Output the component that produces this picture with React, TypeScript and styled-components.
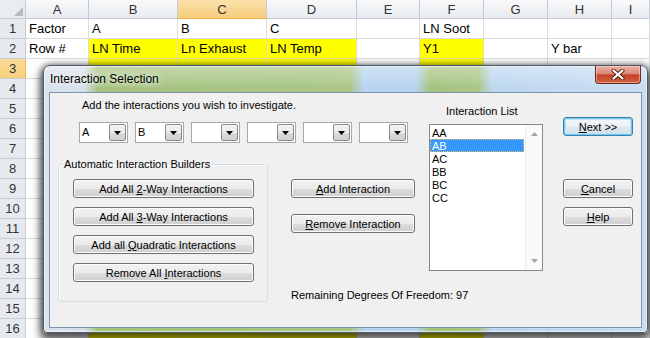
import styled, { createGlobalStyle } from "styled-components";

const GlobalStyle = createGlobalStyle`
  html, body {
    margin: 0;
    padding: 0;
  }
  body {
    background: #fff;
    font-family: "Liberation Sans", Arial, sans-serif;
    overflow: hidden;
  }
`;

const sheetColumns = [
  { key: "A", width: 63 },
  { key: "B", width: 89 },
  { key: "C", width: 89 },
  { key: "D", width: 90 },
  { key: "E", width: 63 },
  { key: "F", width: 64 },
  { key: "G", width: 64 },
  { key: "H", width: 64 },
  { key: "I", width: 38 },
];

const cellText: Record<string, string> = {
  A1: "Factor",
  B1: "A",
  C1: "B",
  D1: "C",
  F1: "LN Soot",
  A2: "Row #",
  B2: "LN Time",
  C2: "Ln Exhaust",
  D2: "LN Temp",
  F2: "Y1",
  H2: "Y bar",
};

const dataColumns = ["B", "C", "D", "F"];
const rowNumbers = Array.from({ length: 16 }, (_, i) => i + 1);

const builders = [
  { before: "Add All ", key: "2", after: "-Way Interactions" },
  { before: "Add All ", key: "3", after: "-Way Interactions" },
  { before: "Add all ", key: "Q", after: "uadratic Interactions" },
  { before: "Remove All ", key: "I", after: "nteractions" },
];

const combos = ["A", "B", "", "", "", ""];
const interactions = ["AA", "AB", "AC", "BB", "BC", "CC"];

export default function App() {
  return (
    <Page>
      <GlobalStyle />
      <Sheet>
        <Corner>
          <svg width="9" height="9" viewBox="0 0 9 9">
            <path d="M9 0 V9 H0 Z" fill="#b6bcc4" />
          </svg>
        </Corner>
        {sheetColumns.map((c) => (
          <ColHeader key={c.key} $active={c.key === "C"}>
            {c.key}
          </ColHeader>
        ))}
        {rowNumbers.map((r) => (
          <Row key={r}>
            <RowHeader $active={r === 3}>{r}</RowHeader>
            {sheetColumns.map((c) => (
              <Cell key={c.key} $filled={r >= 2 && dataColumns.includes(c.key)}>
                {cellText[`${c.key}${r}`]}
              </Cell>
            ))}
          </Row>
        ))}
      </Sheet>

      <Dialog>
        <TitleBar>
          <Title>Interaction Selection</Title>
          <CloseButton>
            <svg width="14" height="11" viewBox="0 0 14 11">
              <path d="M2.5 1.5 L11.5 9.5 M11.5 1.5 L2.5 9.5" stroke="#5a1e14" strokeWidth="4" strokeLinecap="round" />
              <path d="M2.5 1.5 L11.5 9.5 M11.5 1.5 L2.5 9.5" stroke="#fff" strokeWidth="2.2" strokeLinecap="round" />
            </svg>
          </CloseButton>
        </TitleBar>

        <Client>
          <LeftColumn>
            <Instruction>Add the interactions you wish to investigate.</Instruction>
            <ComboRow>
              {combos.map((v, i) => (
                <Combo key={i}>
                  <ComboValue>{v}</ComboValue>
                  <ComboButton>
                    <svg width="7" height="4" viewBox="0 0 7 4">
                      <path d="M0 0 H7 L3.5 4 Z" fill="#000" />
                    </svg>
                  </ComboButton>
                </Combo>
              ))}
            </ComboRow>
            <LowerRow>
              <GroupBox>
                <GroupLegend>Automatic Interaction Builders</GroupLegend>
                <ButtonStack>
                  {builders.map((b) => (
                    <Button key={b.key} $width={181}>
                      <span>
                        {b.before}
                        <u>{b.key}</u>
                        {b.after}
                      </span>
                    </Button>
                  ))}
                </ButtonStack>
              </GroupBox>
              <MiddleColumn>
                <Button $width={124}>
                  <span>
                    <u>A</u>dd Interaction
                  </span>
                </Button>
                <Button $width={124} $gap={16}>
                  <span>
                    <u>R</u>emove Interaction
                  </span>
                </Button>
                <Remaining>Remaining Degrees Of Freedom: 97</Remaining>
              </MiddleColumn>
            </LowerRow>
          </LeftColumn>

          <ListColumn>
            <ListLabel>Interaction List</ListLabel>
            <ListBox>
              <ListItems>
                {interactions.map((item) => (
                  <ListItem key={item} $selected={item === "AB"}>
                    {item}
                  </ListItem>
                ))}
              </ListItems>
              <ScrollTrack>
                <svg width="7" height="4" viewBox="0 0 7 4">
                  <path d="M0 4 H7 L3.5 0 Z" fill="#a3a3a3" />
                </svg>
                <svg width="7" height="4" viewBox="0 0 7 4">
                  <path d="M0 0 H7 L3.5 4 Z" fill="#a3a3a3" />
                </svg>
              </ScrollTrack>
            </ListBox>
          </ListColumn>

          <ActionColumn>
            <Button $width={70} $default>
              <span>
                <u>N</u>ext &gt;&gt;
              </span>
            </Button>
            <Button $width={70} $gap={43}>
              <span>
                <u>C</u>ancel
              </span>
            </Button>
            <Button $width={70} $gap={9}>
              <span>
                <u>H</u>elp
              </span>
            </Button>
          </ActionColumn>
        </Client>
      </Dialog>
    </Page>
  );
}

const Page = styled.div`
  position: relative;
  width: 650px;
  height: 338px;
  overflow: hidden;
`;

const Sheet = styled.div`
  display: grid;
  grid-template-columns: 26px ${sheetColumns.map((c) => `${c.width}px`).join(" ")};
  grid-template-rows: 19px;
  grid-auto-rows: 20px;
  font-size: 13px;
  color: #000;
`;

const Row = styled.div`
  display: contents;
`;

const headerBase = `
  box-sizing: border-box;
  display: flex;
  align-items: center;
  justify-content: center;
  border-right: 1px solid #c5ccd5;
  border-bottom: 1px solid #c5ccd5;
  color: #333;
`;

const Corner = styled.div`
  ${headerBase};
  background: #e9ecf0;
  align-items: flex-end;
  justify-content: flex-end;
  padding: 0 2px 2px 0;
`;

const ColHeader = styled.div<{ $active?: boolean }>`
  ${headerBase};
  background: ${(p) =>
    p.$active
      ? "linear-gradient(#fbe2ac, #f6cd7c)"
      : "linear-gradient(#f8f9fa, #e8ebee)"};
  border-bottom-color: ${(p) => (p.$active ? "#f2b24a" : "#c5ccd5")};
`;

const RowHeader = styled.div<{ $active?: boolean }>`
  ${headerBase};
  background: ${(p) => (p.$active ? "linear-gradient(#fbdc9b, #f7cf7a)" : "#e6eaef")};
  border-right-color: ${(p) => (p.$active ? "#f2b24a" : "#c5ccd5")};
`;

const Cell = styled.div<{ $filled?: boolean }>`
  box-sizing: border-box;
  padding-left: 3px;
  line-height: 19px;
  white-space: nowrap;
  overflow: visible;
  background: ${(p) => (p.$filled ? "#ffff00" : "#fff")};
  border-right: 1px solid ${(p) => (p.$filled ? "#e3e3a0" : "#dadcdd")};
  border-bottom: 1px solid ${(p) => (p.$filled ? "#e3e3a0" : "#dadcdd")};
`;

const Dialog = styled.div`
  position: absolute;
  left: 43px;
  top: 65px;
  width: 605px;
  height: 268px;
  box-sizing: border-box;
  display: flex;
  flex-direction: column;
  padding: 0 5px 4px 5px;
  border: 1px solid #4c5968;
  border-radius: 7px 7px 4px 4px;
  font-family: "Liberation Sans", Arial, sans-serif;
  font-size: 11px;
  color: #000;
  background:
    linear-gradient(180deg, rgba(255, 255, 255, 0.35), rgba(255, 255, 255, 0) 22px),
    linear-gradient(
      90deg,
      #dbe3ec 0px,
      #d6e0ea 40px,
      #a5c37f 54px,
      #a9c686 306px,
      #b8d4f0 320px,
      #b8d4f0 372px,
      #a5c37f 386px,
      #a9c686 434px,
      #bdd7f1 448px,
      #c8ddf2 100%
    );
  box-shadow: inset 0 0 0 1px rgba(255, 255, 255, 0.55), 0 5px 8px 3px rgba(0, 0, 0, 0.6),
    0 0 6px 1px rgba(0, 0, 0, 0.35);
`;

const TitleBar = styled.div`
  height: 26px;
  display: flex;
  align-items: center;
  justify-content: space-between;
  padding-left: 1px;
`;

const Title = styled.span`
  font-size: 12px;
  text-shadow: 0 0 6px rgba(255, 255, 255, 0.95), 0 0 10px rgba(255, 255, 255, 0.8);
`;

const CloseButton = styled.div`
  align-self: flex-start;
  width: 46px;
  height: 18px;
  box-sizing: border-box;
  margin-right: 1px;
  display: flex;
  align-items: center;
  justify-content: center;
  border: 1px solid #6e2a1e;
  border-top: none;
  border-radius: 0 0 4px 4px;
  background: linear-gradient(#e9b0a2 0%, #dc8a78 45%, #c4432a 52%, #d0603f 100%);
  box-shadow: inset 0 0 0 1px rgba(255, 220, 210, 0.5);
`;

const Client = styled.div`
  flex: 1;
  display: flex;
  border: 1px solid #8193a8;
  background: #f0f0f0;
`;

const LeftColumn = styled.div`
  width: 370px;
  flex-shrink: 0;
  display: flex;
  flex-direction: column;
`;

const Instruction = styled.div`
  margin: 5px 0 0 32px;
  line-height: 14px;
`;

const ComboRow = styled.div`
  display: flex;
  gap: 7px;
  margin: 10px 0 0 29px;
`;

const Combo = styled.div`
  width: 49px;
  height: 21px;
  box-sizing: border-box;
  display: flex;
  border: 1px solid #a7a9ae;
  background: #fff;
`;

const ComboValue = styled.span`
  flex: 1;
  padding-left: 2px;
  line-height: 19px;
`;

const ComboButton = styled.span`
  width: 17px;
  box-sizing: border-box;
  margin: 1px;
  display: flex;
  align-items: center;
  justify-content: center;
  border: 1px solid #8a8a8a;
  border-radius: 2px;
  background: linear-gradient(#f2f2f2 0%, #ebebeb 50%, #dcdcdc 51%, #cfcfcf 100%);
`;

const LowerRow = styled.div`
  display: flex;
`;

const GroupBox = styled.fieldset`
  flex-shrink: 0;
  margin: 14px 0 0 8px;
  width: 210px;
  box-sizing: border-box;
  min-width: 0;
  padding: 0 0 7px 0;
  border: 1px solid #d5dfe5;
  border-radius: 3px;
  box-shadow: inset 1px 1px 0 #fff;
`;

const GroupLegend = styled.legend`
  margin-left: 4px;
  padding: 0 1px;
  line-height: 14px;
`;

const ButtonStack = styled.div`
  display: flex;
  flex-direction: column;
  gap: 9px;
  padding: 8px 0 0 14px;
`;

const Button = styled.div<{ $width: number; $gap?: number; $default?: boolean }>`
  width: ${(p) => p.$width}px;
  height: 19px;
  flex-shrink: 0;
  box-sizing: border-box;
  margin-top: ${(p) => p.$gap ?? 0}px;
  display: flex;
  align-items: center;
  justify-content: center;
  white-space: nowrap;
  border: 1px solid ${(p) => (p.$default ? "#3c7fb1" : "#707070")};
  border-radius: 3px;
  background: ${(p) =>
    p.$default
      ? "linear-gradient(#f4f8fb 0%, #eaf1f6 50%, #dfe8ef 51%, #d4e0e9 100%)"
      : "linear-gradient(#f2f2f2 0%, #ebebeb 50%, #dddddd 51%, #cfcfcf 100%)"};
  box-shadow: ${(p) =>
    p.$default ? "inset 0 0 0 1px #72c7f0, inset 0 0 0 2px #bfe6f8" : "inset 0 0 0 1px #fcfcfc"};

  u {
    text-underline-offset: 1px;
  }
`;

const MiddleColumn = styled.div`
  width: 124px;
  flex-shrink: 0;
  display: flex;
  flex-direction: column;
  margin-left: 23px;
  padding-top: 36px;
`;

const Remaining = styled.div`
  margin-top: 55px;
  line-height: 14px;
  white-space: nowrap;
`;

const ListColumn = styled.div`
  margin-left: 9px;
  display: flex;
  flex-direction: column;
`;

const ListLabel = styled.div`
  margin: 11px 0 0 17px;
  line-height: 14px;
`;

const ListBox = styled.div`
  margin-top: 6px;
  width: 114px;
  height: 147px;
  box-sizing: border-box;
  display: flex;
  border: 1px solid #828790;
  background: #fff;
`;

const ListItems = styled.div`
  flex: 1;
  padding-top: 1px;
`;

const ListItem = styled.div<{ $selected?: boolean }>`
  height: 13px;
  box-sizing: border-box;
  margin-right: 1px;
  padding-left: 1px;
  line-height: 12px;
  color: ${(p) => (p.$selected ? "#fff" : "#000")};
  background: ${(p) => (p.$selected ? "#3399ff" : "transparent")};
  border: 1px ${(p) => (p.$selected ? "dotted #f0b46a" : "solid transparent")};
`;

const ScrollTrack = styled.div`
  width: 17px;
  display: flex;
  flex-direction: column;
  align-items: center;
  justify-content: space-between;
  padding: 7px 0 7px;
  box-sizing: border-box;
  background: #fafafa;
  border-left: 1px solid #eeeeee;
`;

const ActionColumn = styled.div`
  margin-left: 20px;
  padding-top: 24px;
  display: flex;
  flex-direction: column;
`;
